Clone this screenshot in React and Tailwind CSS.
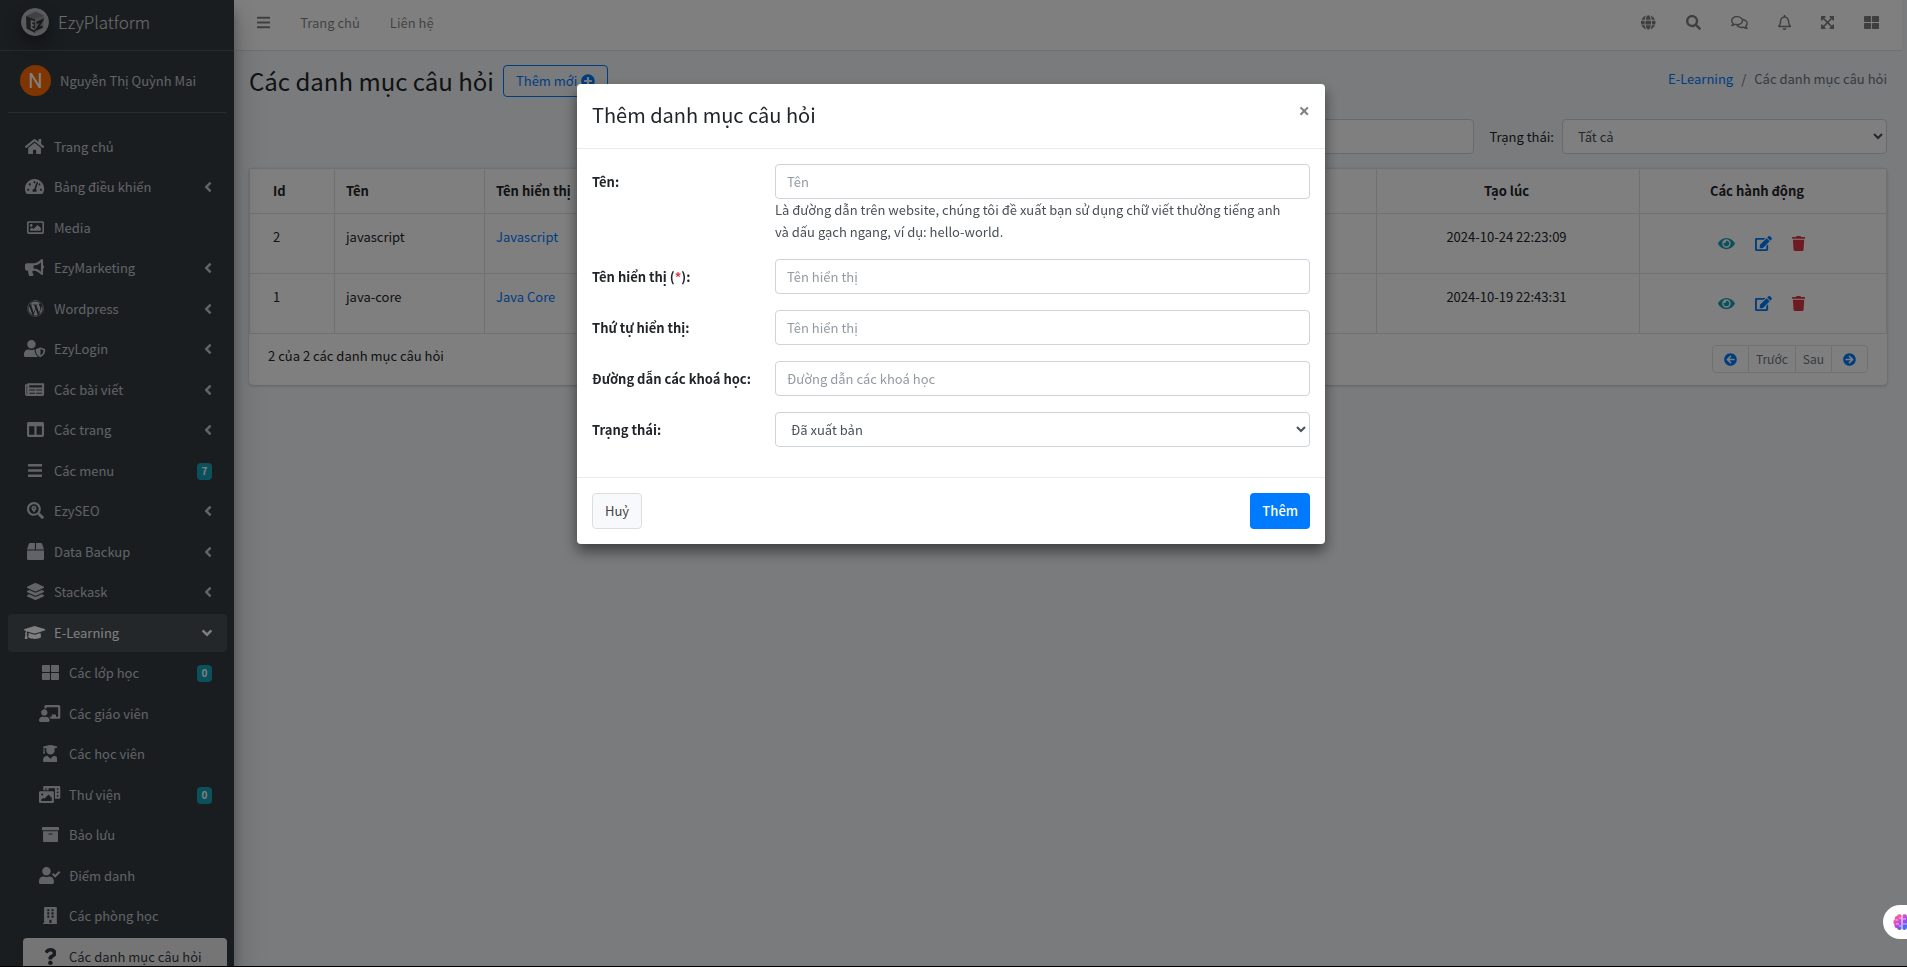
import React from 'react';
import { IconContext } from 'react-icons';
import {
  FaHome, FaTachometerAlt, FaRegImage, FaBullhorn, FaWordpress, FaUserShield, FaNewspaper,
  FaColumns, FaBars, FaSearchLocation, FaBox, FaLayerGroup, FaGraduationCap, FaThLarge,
  FaChalkboardTeacher, FaUserGraduate, FaPhotoVideo, FaArchive, FaUserCheck, FaBuilding,
  FaQuestion, FaAngleLeft, FaAngleDown, FaGlobe, FaSearch, FaRegComments, FaRegBell,
  FaExpandArrowsAlt, FaPlusCircle, FaEye, FaEdit, FaTrash, FaArrowCircleLeft, FaArrowCircleRight,
} from 'react-icons/fa';

const menu = [
  { label: 'Trang chủ', icon: FaHome },
  { label: 'Bảng điều khiển', icon: FaTachometerAlt, tree: true },
  { label: 'Media', icon: FaRegImage },
  { label: 'EzyMarketing', icon: FaBullhorn, tree: true },
  { label: 'Wordpress', icon: FaWordpress, tree: true },
  { label: 'EzyLogin', icon: FaUserShield, tree: true },
  { label: 'Các bài viết', icon: FaNewspaper, tree: true },
  { label: 'Các trang', icon: FaColumns, tree: true },
  { label: 'Các menu', icon: FaBars, badge: 7 },
  { label: 'EzySEO', icon: FaSearchLocation, tree: true },
  { label: 'Data Backup', icon: FaBox, tree: true },
  { label: 'Stackask', icon: FaLayerGroup, tree: true },
  { label: 'E-Learning', icon: FaGraduationCap, open: true },
  { label: 'Các lớp học', icon: FaThLarge, badge: 0, sub: true },
  { label: 'Các giáo viên', icon: FaChalkboardTeacher, sub: true },
  { label: 'Các học viên', icon: FaUserGraduate, sub: true },
  { label: 'Thư viện', icon: FaPhotoVideo, badge: 0, sub: true },
  { label: 'Bảo lưu', icon: FaArchive, sub: true },
  { label: 'Điểm danh', icon: FaUserCheck, sub: true },
  { label: 'Các phòng học', icon: FaBuilding, sub: true },
  { label: 'Các danh mục câu hỏi', icon: FaQuestion, sub: true, active: true },
];

const rows = [
  { id: 2, name: 'javascript', display: 'Javascript', created: '2024-10-24 22:23:09' },
  { id: 1, name: 'java-core', display: 'Java Core', created: '2024-10-19 22:43:31' },
];

const tools = [
  { label: 'Ngôn ngữ', icon: FaGlobe },
  { label: 'Tìm kiếm', icon: FaSearch },
  { label: 'Tin nhắn', icon: FaRegComments },
  { label: 'Thông báo', icon: FaRegBell },
  { label: 'Toàn màn hình', icon: FaExpandArrowsAlt },
  { label: 'Bảng', icon: FaThLarge },
];

const MenuItem = ({ item }) => {
  const Icon = item.icon;
  return (
    <li className={`odd:mb-0.5 even:mb-[3px] ${item.sub ? 'pl-[15px]' : ''}`}>
      <a
        href="#"
        className={`
          flex h-[38px] items-center rounded pl-3 pr-[15px]
          ${item.active ? 'bg-white/90 text-[#343a40]' : item.open ? 'bg-white/10 text-white' : 'text-[#c2c7d0]'}
        `}
      >
        <span className="flex w-[30px] justify-center pb-0.5">
          <Icon className="h-[17px] w-auto shrink-0" />
        </span>
        <span className="ml-1 whitespace-nowrap">{item.label}</span>
        {item.tree && <FaAngleLeft className="ml-auto h-4 w-auto" />}
        {item.open && <FaAngleDown className="ml-auto h-4 w-auto" />}
        {item.badge !== undefined && (
          <span className="ml-auto flex h-[17px] w-[15px] items-center justify-center rounded bg-[#17a2b8] text-[10px] font-bold text-white">
            {item.badge}
          </span>
        )}
      </a>
    </li>
  );
};

const Logo = () => (
  <svg viewBox="0 0 28 28" className="h-7 w-7 rounded-full shadow-[0_8px_16px_rgba(0,0,0,0.4)]">
    <circle cx="14" cy="14" r="14" fill="#b4b6b8" />
    <path d="M5 8 14.500 3.500 23 7.500 14 11.500Z" fill="#808284" />
    <path d="M5 8 14 11.500V25L5.500 20.500Z" fill="#3a3d40" />
    <path d="M14 11.500 23 7.500 22.500 20 14 25Z" fill="#939597" />
    <path d="M13.500 14 10.500 13V20L13.500 21.500M10.500 16.500 13 17.500" stroke="#b4b6b8" strokeWidth="1.500" fill="none" />
    <path d="M15.500 15 21 12.500 16 21 21.500 18.500" stroke="#2d3033" strokeWidth="2" fill="none" />
  </svg>
);

const Sidebar = () => (
  <aside className="z-10 h-screen w-[234px] shrink-0 overflow-hidden bg-[#343a40] shadow-[0_14px_28px_rgba(0,0,0,0.25),0_10px_10px_rgba(0,0,0,0.22)]">
    <a href="#" className="flex h-[51px] items-center border-b border-[#4b545c] pb-[7px] pl-[21px] text-white/80">
      <Logo />
      <span className="ml-[9px] text-[17px] font-light">EzyPlatform</span>
    </a>
    <div className="pr-[7px] pl-2">
      <div className="flex h-[62px] items-center border-b border-[#4f5962] pb-0.5 pl-3 text-[#c2c7d0]">
        <span className="flex h-[31px] w-[31px] items-center justify-center rounded-full bg-[#ff6a00] font-['Roboto',sans-serif] text-xl text-white">N</span>
        <a href="#" className="ml-[9px]">Nguyễn Thị Quỳnh Mai</a>
      </div>
      <nav className="mt-[15px]">
        <ul>
          {menu.map(item => <MenuItem key={item.label} item={item} />)}
        </ul>
      </nav>
    </div>
  </aside>
);

const Navbar = () => (
  <header className="flex h-[51px] items-center border-b border-[#dee2e6] bg-white pb-[5px] pl-[23px] text-black/50">
    <button type="button" aria-label="Menu"><FaBars className="h-[15px] w-auto" /></button>
    <a href="#" className="ml-[30px]">Trang chủ</a>
    <a href="#" className="ml-[30px]">Liên hệ</a>
    <div className="mr-2 ml-auto flex">
      {tools.map(({ label, icon: Icon }) => (
        <button key={label} type="button" aria-label={label} className="px-[15px]">
          <Icon className="h-[15px] w-auto" />
        </button>
      ))}
    </div>
  </header>
);

const CategoryTable = () => (
  <div className="mt-3.5 rounded bg-white shadow-[0_0_1px_rgba(0,0,0,0.13),0_1px_3px_rgba(0,0,0,0.2)]">
    <table className="w-full table-fixed border-collapse border border-[#dee2e6]">
      <thead>
        <tr className="h-[45px] border-b border-[#dee2e6] text-left">
          <th className="w-[85px] border-r border-[#dee2e6] pl-[23px]">Id</th>
          <th className="w-[150px] border-r border-[#dee2e6] px-[11px]">Tên</th>
          <th className="border-r border-[#dee2e6] px-[11px]">Tên hiển thị</th>
          <th className="w-[263px] border-r border-[#dee2e6] pr-[3px] text-center">Tạo lúc</th>
          <th className="w-[247px] pr-3 text-center">Các hành động</th>
        </tr>
      </thead>
      <tbody>
        {rows.map(row => (
          <tr key={row.id} className="h-[60px] border-b border-[#dee2e6] align-top">
            <td className="border-r border-[#dee2e6] pt-3 pl-[23px]">{row.id}</td>
            <td className="border-r border-[#dee2e6] px-[11px] pt-3">{row.name}</td>
            <td className="border-r border-[#dee2e6] px-[11px] pt-3">
              <a href="#" className="text-[#007bff]">{row.display}</a>
            </td>
            <td className="border-r border-[#dee2e6] pt-3 pr-[3px] text-center">{row.created}</td>
            <td className="pr-[3px] align-middle">
              <div className="flex items-center justify-center gap-5">
                <button type="button" aria-label="Xem" className="text-[#17a2b8]"><FaEye className="h-[15px] w-auto" /></button>
                <button type="button" aria-label="Sửa" className="text-[#007bff]"><FaEdit className="h-[15px] w-auto" /></button>
                <button type="button" aria-label="Xoá" className="text-[#dc3545]"><FaTrash className="h-[15px] w-auto" /></button>
              </div>
            </td>
          </tr>
        ))}
      </tbody>
    </table>
    <div className="flex h-[51px] items-start justify-between pt-[11px] pr-[19px] pl-[19px]">
      <span>2 của 2 các danh mục câu hỏi</span>
      <div className="flex h-7 divide-x divide-[#dee2e6] rounded border border-[#dee2e6] text-xs text-[#6c757d]">
        <button type="button" aria-label="Trang đầu" className="px-[11px] text-[#007bff]"><FaArrowCircleLeft className="h-[13px] w-auto" /></button>
        <button type="button" className="px-[7px]">Trước</button>
        <button type="button" className="px-[7px]">Sau</button>
        <button type="button" aria-label="Trang cuối" className="px-[11px] text-[#007bff]"><FaArrowCircleRight className="h-[13px] w-auto" /></button>
      </div>
    </div>
  </div>
);

const FormRow = ({ id, label, required, placeholder, help }) => (
  <div className="flex items-start">
    <label htmlFor={id} className="w-[183px] shrink-0 pt-[7px] font-bold">
      {label}{required && <> (<span className="text-[#dc3545]">*</span>)</>}:
    </label>
    <div className="flex-1">
      <input
        id={id}
        type="text"
        placeholder={placeholder}
        className="block h-[35px] w-full rounded border border-[#ced4da] px-[11px] placeholder:text-[#939ba2]"
      />
      {help && <p className="pr-4 leading-[22px] text-[#495057]">{help}</p>}
    </div>
  </div>
);

const Modal = () => (
  <div className="fixed inset-0 z-20 flex items-start justify-center border-b border-black bg-black/50 pr-[5px]">
    <div role="dialog" aria-labelledby="modal-title" className="mt-[84px] w-[748px] rounded bg-white text-[#212529] shadow-[0_7px_14px_rgba(0,0,0,0.5)]">
      <div className="flex h-[65px] items-start justify-between border-b border-[#e9ecef] px-[15px] pt-[15px]">
        <h4 id="modal-title" className="text-xl leading-8">Thêm danh mục câu hỏi</h4>
        <button type="button" aria-label="Đóng" className="font-['Noto_Sans',sans-serif] text-xl leading-6 font-bold text-black/50">×</button>
      </div>
      <form className="space-y-4 px-[15px] pt-[15px] pb-[30px]">
        <FormRow
          id="name"
          label="Tên"
          placeholder="Tên"
          help="Là đường dẫn trên website, chúng tôi đề xuất bạn sử dụng chữ viết thường tiếng anh và dấu gạch ngang, ví dụ: hello-world."
        />
        <FormRow id="display-name" label="Tên hiển thị" required placeholder="Tên hiển thị" />
        <FormRow id="display-order" label="Thứ tự hiển thị" placeholder="Tên hiển thị" />
        <FormRow id="course-path" label="Đường dẫn các khoá học" placeholder="Đường dẫn các khoá học" />
        <div className="flex items-start">
          <label htmlFor="status" className="w-[183px] shrink-0 pt-[7px] font-bold">Trạng thái:</label>
          <select id="status" className="h-[35px] flex-1 rounded border border-[#ced4da] bg-white px-[11px] text-[#495057]">
            <option>Đã xuất bản</option>
          </select>
        </div>
      </form>
      <div className="flex justify-between border-t border-[#e9ecef] p-[15px]">
        <button type="button" className="h-9 rounded border border-[#ddd] bg-[#f8f9fa] px-3 text-[#444]">Huỷ</button>
        <button type="button" className="h-9 rounded bg-[#007bff] px-3 font-medium text-white">Thêm</button>
      </div>
    </div>
  </div>
);

const BrainButton = () => (
  <button type="button" aria-label="AI" className="fixed right-0 bottom-7 z-30 flex h-[34px] w-6 items-center overflow-hidden rounded-l-full bg-white pl-2.5">
    <svg viewBox="0 0 18 18" className="h-[18px] w-[18px] shrink-0">
      <defs>
        <linearGradient id="brain" x1="0" y1="0" x2="1" y2="1">
          <stop offset="0" stopColor="#ff7a45" />
          <stop offset="0.350" stopColor="#e14bd0" />
          <stop offset="0.700" stopColor="#5b5bf5" />
          <stop offset="1" stopColor="#23b7ff" />
        </linearGradient>
      </defs>
      <path d="M8.500 2.500C7.500.500 4.500 1 4 3 2 3 1.500 5 2 6.200 0 7 0 10.500 1.500 11.500 1 14 2.500 15 4 15c.500 2.200 3.500 2.500 4.500 1zM9.500 2.500C10.500.500 13.500 1 14 3c2 0 2.500 2 2 3.200 2 .800 2 4.300.500 5.300.500 2.500-1 3.500-2.500 3.500-.500 2.200-3.500 2.500-4.500 1z" fill="url(#brain)" />
      <path d="M2.500 7H5M3 11h3M6 5h2.500M6 13h2M10 6h3M10 11h4" stroke="#fff" strokeWidth="0.900" opacity="0.700" />
    </svg>
  </button>
);

// size "auto" keeps each glyph's own aspect ratio, so only the height is set by class
export default function App() {
  return (
    <IconContext.Provider value={{ size: 'auto' }}>
      <div className="flex h-screen overflow-hidden bg-[#f4f6f9] font-['Noto_Sans_CJK_SC',sans-serif] text-[13px] leading-[22px] text-[#212529]">
        <Sidebar />
        <div className="mr-[5px] min-w-0 flex-1">
          <Navbar />
          <main className="px-[15px]">
            <div className="flex items-center pt-3.5">
              <h1 className="text-2xl leading-8">Các danh mục câu hỏi</h1>
              <button type="button" className="ml-[9px] flex h-8 items-center rounded border border-[#007bff] px-3 text-[#007bff]">
                Thêm mới<FaPlusCircle className="ml-1 h-3.5 w-auto" />
              </button>
              <nav className="ml-auto flex gap-2 pb-1 text-[#6c757d]">
                <a href="#" className="text-[#007bff]">E-Learning</a>
                <span>/</span>
                <span>Các danh mục câu hỏi</span>
              </nav>
            </div>
            <div className="mt-[22px] flex items-center justify-end">
              <label htmlFor="keyword" className="mr-2">Từ khoá:</label>
              <input id="keyword" type="text" className="h-[35px] w-[325px] rounded border border-[#ced4da] bg-white px-3" />
              <label htmlFor="filter-status" className="mr-2 ml-[15px]">Trạng thái:</label>
              <select id="filter-status" className="h-[35px] w-[325px] rounded border border-[#ced4da] bg-white px-[11px] text-[#495057]">
                <option>Tất cả</option>
              </select>
            </div>
            <CategoryTable />
          </main>
        </div>
        <Modal />
        <BrainButton />
      </div>
    </IconContext.Provider>
  );
}
